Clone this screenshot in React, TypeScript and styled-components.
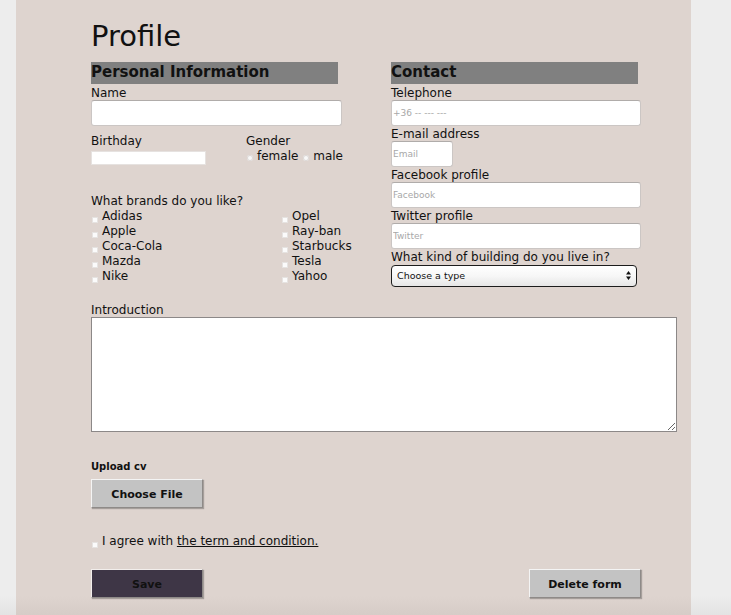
import React from "react";
import styled, { createGlobalStyle } from "styled-components";

const Global = createGlobalStyle`
  html, body { margin: 0; padding: 0; }
  body {
    background: linear-gradient(to bottom, #ededed 0, #ededed 596px, #e3e3e3 615px);
    min-height: 615px;
    font-family: "DejaVu Sans", Verdana, sans-serif;
    color: #111;
  }
  * { box-sizing: border-box; }
`;

const Panel = styled.main`
  margin-left: 16px;
  width: 675px;
  min-height: 615px;
  padding: 20px 0 16px 75px;
  background: linear-gradient(to bottom, #ded4cf 0, #ded4cf 596px, #d6ccc7 615px);
`;

const Title = styled.h1`
  margin: 0 0 10px;
  font-size: 29px;
  font-weight: normal;
  line-height: 32px;
`;

const Columns = styled.div`
  display: grid;
  grid-template-columns: 300px 300px;
  align-items: start;
`;

const Column = styled.section`
  display: flex;
  flex-direction: column;
  align-items: flex-start;
`;

const SectionTitle = styled.h2`
  margin: 0 0 1px;
  width: 247px;
  height: 22px;
  background: #808080;
  font-size: 15px;
  font-weight: bold;
  line-height: 20px;
`;

const Label = styled.label`
  display: block;
  font-size: 12px;
  line-height: 14px;
  padding-top: 1px;
`;

const TextInput = styled.input<{ $w: number; $h?: number }>`
  display: block;
  width: ${(p) => p.$w}px;
  height: ${(p) => p.$h ?? 26}px;
  margin: 0;
  padding: 0 1px;
  border: 1px solid #cbc6c4;
  border-top-color: #b0acaa;
  border-radius: ${(p) => (p.$h ? 0 : 3)}px;
  background: #fff;
  font-family: "DejaVu Sans", Verdana, sans-serif;
  font-size: 9px;
  color: #222;
  outline: none;
  &::placeholder { color: #a8a8a8; }
`;

const PairRow = styled.div`
  display: flex;
  margin-top: 7px;
`;

const Field = styled.div<{ $w?: number }>`
  width: ${(p) => (p.$w ? `${p.$w}px` : "auto")};
`;

const BirthdayInput = styled(TextInput)`
  margin-top: 3px;
  border-color: #e6e2e0;
`;

const Options = styled.div`
  font-size: 12px;
  line-height: 14px;
  padding-top: 1px;
  white-space: nowrap;
`;

const Radio = styled.input.attrs({ type: "radio" })`
  appearance: none;
  width: 6px;
  height: 6px;
  margin: 0 4px 0 1px;
  border-radius: 50%;
  background: #f8f8f8;
  border: none;
  box-shadow: inset 0 0 0 1px #dcd8d6;
  vertical-align: -1px;
`;

const Check = styled.input.attrs({ type: "checkbox" })`
  appearance: none;
  width: 6px;
  height: 6px;
  margin: 0 4px 0 1px;
  background: #fbfbfb;
  border: none;
  box-shadow: inset 0 0 0 1px #e6e3e1;
  vertical-align: -3px;
`;

const Question = styled.p`
  margin: 28px 0 0;
  padding-top: 1px;
  font-size: 12px;
  line-height: 14px;
`;

const BrandGrid = styled.div`
  display: grid;
  grid-template-columns: 190px 190px;
  grid-auto-flow: column;
  grid-template-rows: repeat(5, 15px);
`;

const BrandItem = styled.label`
  font-size: 12px;
  line-height: 14px;
  padding-top: 1px;
  white-space: nowrap;
`;

const SelectWrap = styled.div`
  position: relative;
  width: 246px;
  height: 22px;
`;

const Select = styled.select`
  appearance: none;
  width: 100%;
  height: 100%;
  margin: 0;
  padding: 0 0 1px 5px;
  border: 1px solid #1c1c1c;
  border-radius: 4px;
  background: linear-gradient(to bottom, #ffffff 0%, #f7f7f7 50%, #e6e6e6 100%);
  font-family: "DejaVu Sans", Verdana, sans-serif;
  font-size: 9.5px;
  color: #111;
  outline: none;
`;

const Arrows = styled.svg`
  position: absolute;
  right: 6px;
  top: 7px;
  pointer-events: none;
`;

const IntroLabel = styled(Label)`
  margin-top: 16px;
`;

const TextArea = styled.textarea`
  display: block;
  width: 586px;
  height: 115px;
  margin: 0;
  border: 1px solid #8c8888;
  background: #fff;
  resize: both;
  outline: none;
`;

const UploadLabel = styled.p`
  margin: 28px 0 7px;
  padding-top: 1px;
  font-size: 10px;
  font-weight: bold;
  line-height: 11px;
`;

const Button = styled.button<{ $dark?: boolean }>`
  width: 112px;
  height: 29px;
  margin: 0;
  padding: 2px 0 0;
  border: 1px solid;
  border-color: ${(p) => (p.$dark ? "#f2eeec" : "#f4f4f4")} #8e8a88 #8e8a88 ${(p) => (p.$dark ? "#f2eeec" : "#f4f4f4")};
  background: ${(p) => (p.$dark ? "#3e3646" : "#c3c3c3")};
  color: #111;
  font-family: "DejaVu Sans", Verdana, sans-serif;
  font-size: 11px;
  font-weight: bold;
  box-shadow: 1px 1px 1px rgba(0, 0, 0, 0.25);
`;

const Agree = styled.p`
  margin: 26px 0 0;
  font-size: 12px;
  line-height: 15px;
`;

const Link = styled.a`
  color: #111;
  text-decoration: underline;
`;

const Actions = styled.div`
  display: flex;
  justify-content: space-between;
  width: 550px;
  margin-top: 20px;
`;

const brandsLeft = ["Adidas", "Apple", "Coca-Cola", "Mazda", "Nike"];
const brandsRight = ["Opel", "Ray-ban", "Starbucks", "Tesla", "Yahoo"];

export default function App() {
  return (
    <>
      <Global />
      <Panel>
        <Title>Profile</Title>
        <Columns>
          <Column>
            <SectionTitle>Personal Information</SectionTitle>
            <Label htmlFor="name">Name</Label>
            <TextInput id="name" $w={251} />
            <PairRow>
              <Field $w={155}>
                <Label htmlFor="bday">Birthday</Label>
                <BirthdayInput id="bday" $w={115} $h={14} />
              </Field>
              <Field>
                <Label as="div">Gender</Label>
                <Options>
                  <label>
                    <Radio name="gender" />female
                  </label>{" "}
                  <label>
                    <Radio name="gender" />male
                  </label>
                </Options>
              </Field>
            </PairRow>
            <Question>What brands do you like?</Question>
            <BrandGrid>
              {[...brandsLeft, ...brandsRight].map((b) => (
                <BrandItem key={b}>
                  <Check />
                  {b}
                </BrandItem>
              ))}
            </BrandGrid>
          </Column>
          <Column>
            <SectionTitle>Contact</SectionTitle>
            <Label htmlFor="tel">Telephone</Label>
            <TextInput id="tel" $w={250} placeholder="+36 -- --- ---" />
            <Label htmlFor="mail">E-mail address</Label>
            <TextInput id="mail" $w={62} placeholder="Email" />
            <Label htmlFor="fb">Facebook profile</Label>
            <TextInput id="fb" $w={250} placeholder="Facebook" />
            <Label htmlFor="tw">Twitter profile</Label>
            <TextInput id="tw" $w={250} placeholder="Twitter" />
            <Label htmlFor="bld">What kind of building do you live in?</Label>
            <SelectWrap>
              <Select id="bld" defaultValue="">
                <option value="">Choose a type</option>
                <option>House</option>
                <option>Flat</option>
              </Select>
              <Arrows width="5" height="9" viewBox="0 0 5 9">
                <path d="M2.5 0 L5 3.5 L0 3.5 Z M2.5 9 L5 5.5 L0 5.5 Z" fill="#111" />
              </Arrows>
            </SelectWrap>
          </Column>
        </Columns>
        <IntroLabel htmlFor="intro">Introduction</IntroLabel>
        <TextArea id="intro" />
        <UploadLabel>Upload cv</UploadLabel>
        <Button type="button">Choose File</Button>
        <Agree>
          <label>
            <Check />I agree with{" "}
          </label>
          <Link href="#">the term and condition.</Link>
        </Agree>
        <Actions>
          <Button type="button" $dark>
            Save
          </Button>
          <Button type="button">Delete form</Button>
        </Actions>
      </Panel>
    </>
  );
}
